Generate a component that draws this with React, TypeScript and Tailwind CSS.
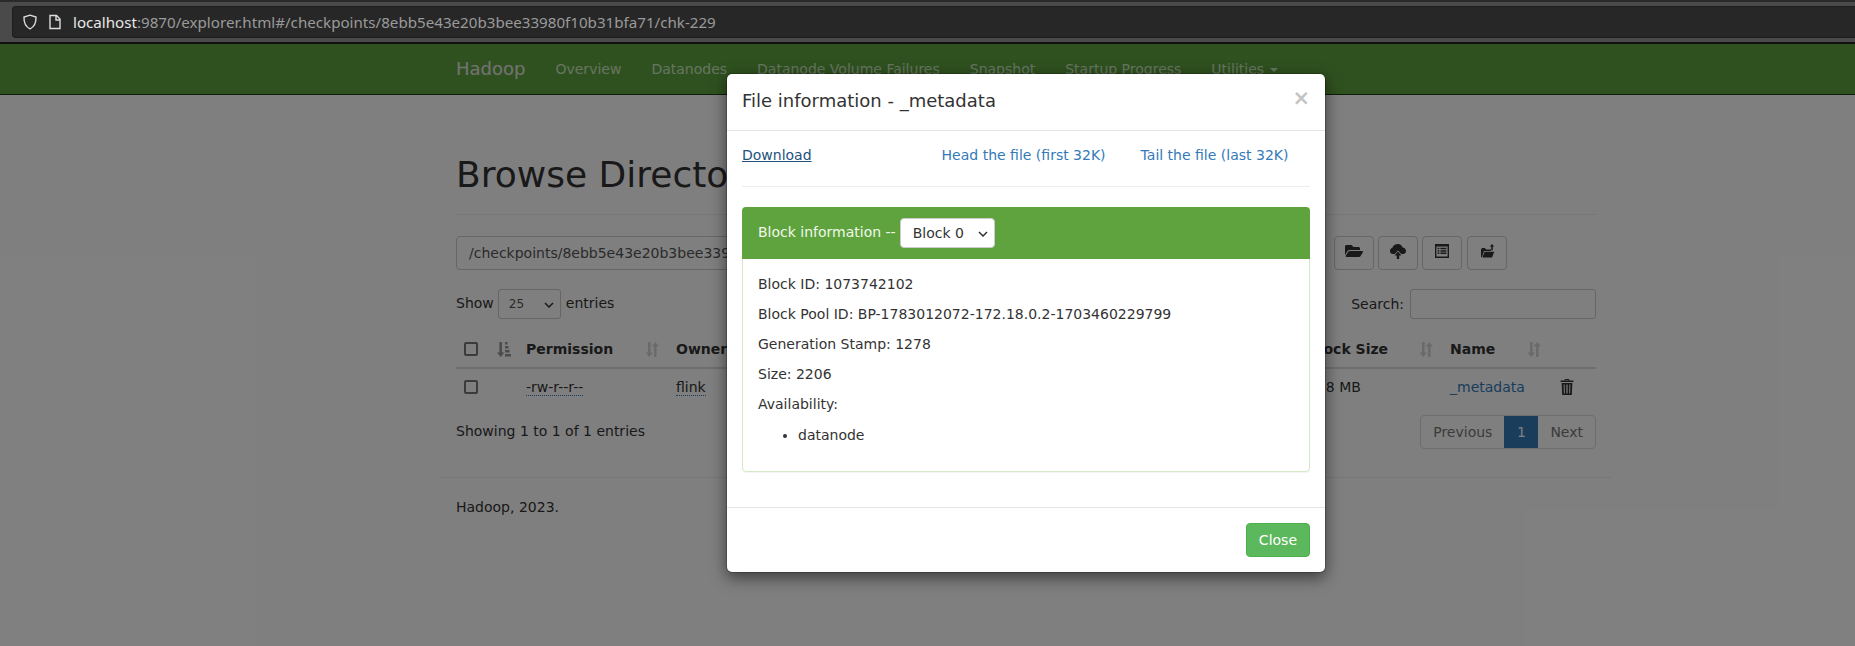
import React from "react";
import { FaFolderOpen } from "react-icons/fa";

const SortBoth = () => (
  <svg width="14" height="15" viewBox="0 0 14 15" className="absolute right-[9px] top-[11px] opacity-20" fill="#333">
    <path d="M3 0h2.6v10.5H8L4.3 15 .6 10.5H3z" />
    <path d="M9 15h2.6V4.5H14L10.3 0 6.6 4.5H9z" />
  </svg>
);

const SortActive = () => (
  <svg width="14" height="15" viewBox="0 0 14 15" className="absolute left-[41px] top-[11px] opacity-50" fill="#333">
    <path d="M2.4 0H5v10.5h2.4L3.7 15 0 10.5h2.4z" />
    <path d="M8 0h2.5v2.4H8zM8 4h3.5v2.4H8zM8 8h4.6v2.4H8zM8 12h6v2.6H8z" />
  </svg>
);

const CloudUp = () => (
  <svg width="16" height="15" viewBox="0 0 16 15" fill="#333">
    <path d="M8 0c2.300 0 4 1.400 4.500 3.400C14.500 3.600 16 5 16 6.900c0 1.700-1.200 3-2.900 3.100h-1.900L8 6.400 4.800 10H3C1.300 9.900 0 8.600 0 6.900 0 5.300 1 4.100 2.400 3.700 3 1.500 5.300 0 8 0z" />
    <path d="M8 7.600l3.400 3.800H9.200V15H6.800v-3.600H4.600z" />
  </svg>
);

const ListAlt = () => (
  <svg width="14" height="14" viewBox="0 0 14 14" fill="#333">
    <path fillRule="evenodd" d="M0 0h14v14H0zM1.400 2.400v10.200h11.200V2.400z" />
    <path d="M2.600 3.800h1.800v1.500H2.600zM5.400 3.800h6v1.500h-6zM2.600 6.200h1.800v1.500H2.600zM5.400 6.200h6v1.500h-6zM2.600 8.600h1.800v1.500H2.600zM5.400 8.600h6v1.500h-6z" />
  </svg>
);

const FolderUp = () => (
  <svg width="15" height="14" viewBox="0 0 15 14" fill="#333">
    <path d="M1 5.500V13h1l2-6h7V5.500H6L5 4H2z" />
    <path d="M4.600 7.800h9.600L12 13.600H2.400z" />
    <path d="M12 0l2.200 2.600h-1.400v3.600h-1.600V2.600H9.800z" />
  </svg>
);

const Trash = () => (
  <svg width="14" height="16" viewBox="0 0 14 16" fill="#333" className="ml-[2px] mt-[-1px]">
    <path d="M5 0h4l.6 1.400H13.400V3H.6V1.400h3.800zM5.600 .9l-.2.500h3.200l-.2-.5z" />
    <path fillRule="evenodd" d="M1.600 4h10.800l-.6 12H2.200zM3.600 5.400l.3 9.200h.9l-.2-9.200zM6.400 5.400v9.200h1.200V5.400zM9.400 5.400l-.2 9.200h.9l.3-9.200z" />
  </svg>
);

const ToolBtn = ({ children }: { children: React.ReactNode }) => (
  <button className="flex h-[34px] w-[40px] items-center justify-center rounded-[4px] border border-[#ccc] bg-white pb-[4px]">
    {children}
  </button>
);

const Chevron = ({ className }: { className: string }) => (
  <svg width="10" height="6" viewBox="0 0 10 6" fill="none" stroke="#333" strokeWidth="1.5" className={className}>
    <path d="M1 1l4 4 4-4" />
  </svg>
);

const headers: [string, string][] = [
  ["Owner", "w-[121px]"],
  ["Group", "w-[100px]"],
  ["Size", "w-[80px]"],
  ["Last Modified", "w-[170px]"],
  ["Replication", "w-[161px]"],
  ["Block Size", "w-[142px]"],
  ["Name", "w-[108px]"],
];

export default function App() {
  return (
    <div className="relative flex h-[646px] w-[1855px] flex-col overflow-hidden bg-white font-['DejaVu_Sans',sans-serif] text-[14px] leading-[20px] text-[#333]">
      {/* Browser chrome */}
      <div className="h-[44px] shrink-0 border-b-2 border-t-2 border-b-[#111] border-t-[#2a2a2a] bg-[#4a4a4a] pl-[12px] pt-[4px]">
        <div className="flex h-[32px] items-center rounded-l-[4px] border border-r-0 border-[#1d1d1d] bg-[#272727] pl-[8px] font-['Noto_Sans',sans-serif] text-[15.15px]">
          <svg width="16" height="16" viewBox="0 0 16 16" fill="none" stroke="#ddd" strokeWidth="1.4" className="ml-[1px]">
            <path d="M8 1.200l6 1.900c.2 5.500-1.600 9.600-6 11.700C3.600 12.700 1.800 8.600 2 3.100z" />
          </svg>
          <svg width="14" height="16" viewBox="0 0 14 16" fill="none" stroke="#ddd" strokeWidth="1.4" className="ml-[10px]">
            <path d="M2 1.500h6.500L12 5v9.500H2zM8 1.500V6h4" />
          </svg>
          <span className="ml-[11px] text-[#e8e8e8]">localhost</span>
          <span className="text-[#9a9a9a]">:9870/explorer.html#/checkpoints/8ebb5e43e20b3bee33980f10b31bfa71/chk-229</span>
        </div>
      </div>

      {/* Page */}
      <div className="relative min-h-0 flex-1">
        <nav className="h-[51px] border-b border-[#1c3a10] bg-[#5fa33e]">
          <div className="ml-[441px] flex h-[50px] w-[1170px] items-center px-[15px]">
            <a className="mr-[15px] text-[18px] text-[#e6e6e6]">Hadoop</a>
            <a className="px-[15px] text-[#cde8c4]">Overview</a>
            <a className="px-[15px] text-[#cde8c4]">Datanodes</a>
            <a className="px-[15px] text-[#cde8c4]">Datanode Volume Failures</a>
            <a className="px-[15px] text-[#cde8c4]">Snapshot</a>
            <a className="px-[15px] text-[#cde8c4]">Startup Progress</a>
            <a className="flex items-center gap-[6px] px-[15px] text-[#cde8c4]">
              Utilities
              <span className="mt-[2px] h-0 w-0 border-x-[4px] border-t-[4px] border-x-transparent border-t-[#cde8c4]" />
            </a>
          </div>
        </nav>

        <div className="ml-[441px] w-[1170px] px-[15px]">
          <div className="mt-[60px] border-b border-[#eee] pb-[19px]">
            <h1 className="text-[36px] leading-[40px]">Browse Directory</h1>
          </div>

          <div className="mt-[21px] flex gap-[4px]">
            <div className="mr-[10px] flex h-[34px] w-[864px] items-center rounded-[4px] border border-[#ccc] bg-white px-[12px] text-[#555]">
              /checkpoints/8ebb5e43e20b3bee33980f10b31bfa71/chk-229
            </div>
            <ToolBtn><FaFolderOpen size={18} color="#333" /></ToolBtn>
            <ToolBtn><CloudUp /></ToolBtn>
            <ToolBtn><ListAlt /></ToolBtn>
            <div className="ml-[1px]"><ToolBtn><FolderUp /></ToolBtn></div>
          </div>

          <div className="mt-[19px] flex items-center justify-between">
            <div className="flex items-center">
              <span className="-mt-[2px]">Show</span>
              <div className="relative ml-[4px] flex h-[30px] w-[63px] items-center rounded-[3px] border border-[#ccc] bg-white pl-[10px] text-[12px] text-[#555]">
                25
                <Chevron className="absolute right-[6px] top-[12px]" />
              </div>
              <span className="-mt-[2px] ml-[5px]">entries</span>
            </div>
            <div className="flex items-center">
              Search:
              <div className="ml-[6px] h-[30px] w-[186px] rounded-[3px] border border-[#ccc] bg-white" />
            </div>
          </div>

          <table className="mt-[12px] w-[1140px] table-fixed border-collapse">
            <thead>
              <tr className="border-b-2 border-[#ddd] font-bold">
                <th className="relative h-[37px] w-[62px] p-0 pl-[8px] text-left">
                  <span className="block h-[14px] w-[14px] rounded-[2px] border-2 border-[#767676] bg-white" />
                  <SortActive />
                </th>
                <th className="relative w-[150px] p-[8px] text-left">
                  Permission
                  <SortBoth />
                </th>
                {headers.map(([h, w]) => (
                  <th key={h} className={`relative ${w} p-[8px] text-left`}>
                    {h}
                    <SortBoth />
                  </th>
                ))}
                <th className="p-0" />
              </tr>
            </thead>
            <tbody>
              <tr className="h-[37px]">
                <td className="pl-[8px]">
                  <span className="block h-[14px] w-[14px] rounded-[2px] border-2 border-[#767676] bg-white" />
                </td>
                <td className="px-[8px]">
                  <span className="border-b border-dotted border-[#337ab7]">-rw-r--r--</span>
                </td>
                <td className="px-[8px]">
                  <span className="border-b border-dotted border-[#337ab7]">flink</span>
                </td>
                <td className="px-[8px]">
                  <span className="border-b border-dotted border-[#337ab7]">supergroup</span>
                </td>
                <td className="px-[8px]">2.15 KB</td>
                <td className="px-[8px]">Dec 25 08:04</td>
                <td className="px-[8px]">1</td>
                <td className="px-[8px]">128 MB</td>
                <td className="px-[8px] text-[#337ab7]">_metadata</td>
                <td className="px-[8px]"><Trash /></td>
              </tr>
            </tbody>
          </table>

          <div className="mt-[10px] flex items-start justify-between">
            <div className="mt-[6px]">Showing 1 to 1 of 1 entries</div>
            <div className="flex h-[34px] overflow-hidden rounded-[4px] border border-[#ddd]">
              <span className="flex items-center px-[12px] text-[#777]">Previous</span>
              <span className="flex w-[34px] items-center justify-center bg-[#337ab7] text-white">1</span>
              <span className="flex items-center px-[12px] text-[#777]">Next</span>
            </div>
          </div>
        </div>

        <div className="ml-[441px] mt-[28px] w-[1170px] border-t border-[#eee] px-[15px] pt-[19px]">Hadoop, 2023.</div>

        {/* Backdrop */}
        <div className="absolute inset-0 bg-black/50" />

        {/* Modal */}
        <div className="absolute left-[726px] top-[29px] w-[600px] rounded-[6px] border border-black/20 bg-white bg-clip-padding shadow-[0_5px_15px_rgba(0,0,0,0.5)]">
          <div className="relative h-[57px] border-b border-[#e5e5e5] px-[15px] pt-[14px]">
            <h4 className="text-[18px] leading-[26px]">File information - _metadata</h4>
            <span className="absolute right-[15px] top-[14px] text-[21px] font-bold leading-[21px] text-[#c4c4c4]">×</span>
          </div>
          <div className="px-[15px] pt-[14px]">
            <div className="flex h-[20px] items-center">
              <a className="text-[#23527c] underline">Download</a>
              <a className="ml-[130px] text-[#337ab7]">Head the file (first 32K)</a>
              <a className="ml-[35px] text-[#337ab7]">Tail the file (last 32K)</a>
            </div>
            <div className="mt-[21px] border-t border-[#eee]" />
            <div className="mb-[35px] mt-[20px] rounded-[4px] border border-[#d6e9c6] shadow-[0_1px_1px_rgba(0,0,0,0.05)]">
              <div className="-mx-px -mt-px flex h-[52px] items-center rounded-t-[4px] bg-[#5fa33e] px-[16px] text-[#f0f8ea]">
                <span className="-mt-[2px]">Block information --</span>
                <div className="relative ml-[4px] flex h-[30px] w-[95px] items-center rounded-[4px] border border-[#ccc] bg-white pl-[12px] text-[#333]">
                  Block 0
                  <Chevron className="absolute right-[6px] top-[12px]" />
                </div>
              </div>
              <div className="p-[15px] pb-[26px]">
                <p className="mb-[10px]">Block ID: 1073742102</p>
                <p className="mb-[10px]">Block Pool ID: BP-1783012072-172.18.0.2-1703460229799</p>
                <p className="mb-[10px]">Generation Stamp: 1278</p>
                <p className="mb-[10px]">Size: 2206</p>
                <p className="mb-[11px]">Availability:</p>
                <ul className="list-disc pl-[40px]">
                  <li>datanode</li>
                </ul>
              </div>
            </div>
          </div>
          <div className="flex justify-end border-t border-[#e5e5e5] p-[15px]">
            <button className="h-[34px] rounded-[4px] border border-[#4cae4c] bg-[#5cb85c] px-[12px] text-white">Close</button>
          </div>
        </div>
      </div>
    </div>
  );
}
